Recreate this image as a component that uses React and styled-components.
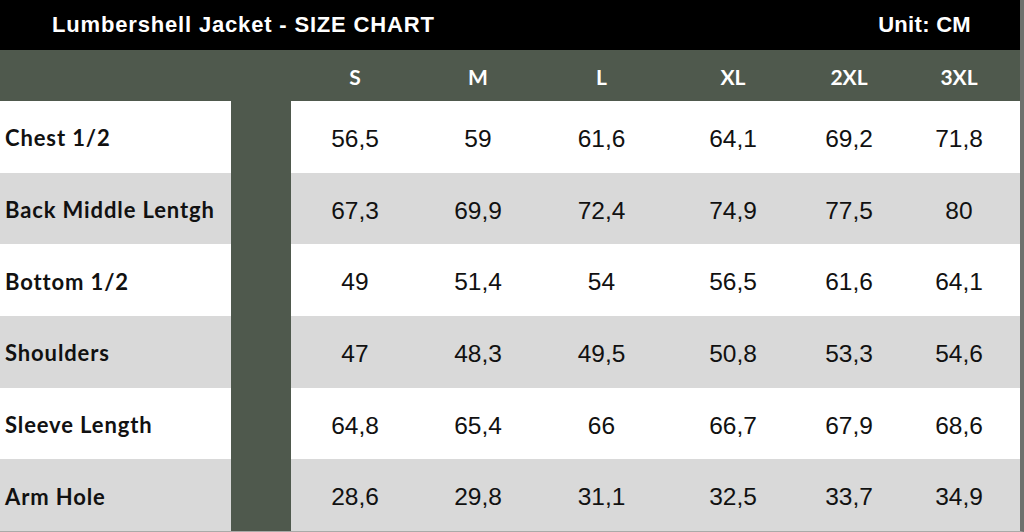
import React from 'react';
import styled, { createGlobalStyle } from 'styled-components';

const GlobalStyle = createGlobalStyle`
  html, body {
    margin: 0;
    padding: 0;
    background: #ffffff;
    overflow: hidden;
  }
`;

const GREEN = '#4f594d';
const COLS = '231px 60px 128px 118px 129px 134px 98px 122px';

const Chart = styled.div`
  width: 1024px;
  height: 532px;
  display: flex;
  flex-direction: column;
  box-sizing: border-box;
  border-right: 4px solid #6e706d;
  border-bottom: 1px solid #a9aaa8;
  background: #ffffff;
`;

const TitleBar = styled.div`
  height: 50px;
  background: #000000;
  display: flex;
  align-items: center;
  justify-content: space-between;
  padding: 0 49px 0 52px;
  color: #ffffff;
  font-family: 'Liberation Sans', Arial, sans-serif;
  font-weight: bold;
  font-size: 22px;
`;

const Title = styled.span`
  letter-spacing: 0.83px;
`;

const Unit = styled.span`
  letter-spacing: 0.3px;
`;

const HeadRow = styled.div`
  height: 51px;
  background: ${GREEN};
  display: grid;
  grid-template-columns: ${COLS};
  align-items: center;
`;

const SizeCell = styled.div`
  text-align: center;
  color: #ffffff;
  font-family: Lato, 'Open Sans', sans-serif;
  font-weight: 700;
  font-size: 21px;
  padding-top: 2px;
`;

const Body = styled.div`
  flex: 1;
  display: flex;
  flex-direction: column;
`;

const Row = styled.div`
  flex: 1;
  display: grid;
  grid-template-columns: ${COLS};
  align-items: center;
  background: ${(p) => (p.$shaded ? '#d9d9d9' : '#ffffff')};
`;

const Label = styled.div`
  padding: 2px 0 0 5px;
  font-family: Lato, 'Open Sans', sans-serif;
  font-weight: 700;
  font-size: 22px;
  letter-spacing: 0.88px;
  color: #111111;
  white-space: nowrap;
`;

const Divider = styled.div`
  align-self: stretch;
  background: ${GREEN};
`;

const Value = styled.div`
  text-align: center;
  font-family: 'Liberation Sans', Arial, sans-serif;
  font-size: 24.5px;
  color: #111111;
  padding-top: 4px;
`;

const sizes = ['S', 'M', 'L', 'XL', '2XL', '3XL'];

const rows = [
  ['Chest 1/2', ['56,5', '59', '61,6', '64,1', '69,2', '71,8']],
  ['Back Middle Lentgh', ['67,3', '69,9', '72,4', '74,9', '77,5', '80']],
  ['Bottom 1/2', ['49', '51,4', '54', '56,5', '61,6', '64,1']],
  ['Shoulders', ['47', '48,3', '49,5', '50,8', '53,3', '54,6']],
  ['Sleeve Length', ['64,8', '65,4', '66', '66,7', '67,9', '68,6']],
  ['Arm Hole', ['28,6', '29,8', '31,1', '32,5', '33,7', '34,9']],
];

export default function App() {
  return (
    <>
      <GlobalStyle />
      <Chart>
        <TitleBar>
          <Title>Lumbershell Jacket - SIZE CHART</Title>
          <Unit>Unit: CM</Unit>
        </TitleBar>
        <HeadRow>
          <div />
          <div />
          {sizes.map((s) => (
            <SizeCell key={s}>{s}</SizeCell>
          ))}
        </HeadRow>
        <Body>
          {rows.map(([label, values], i) => (
            <Row key={label} $shaded={i % 2 === 1}>
              <Label>{label}</Label>
              <Divider />
              {values.map((v, j) => (
                <Value key={j}>{v}</Value>
              ))}
            </Row>
          ))}
        </Body>
      </Chart>
    </>
  );
}
